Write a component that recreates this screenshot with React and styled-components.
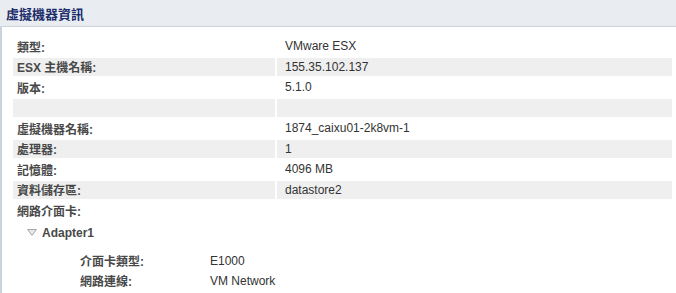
import React from 'react'
import styled, { createGlobalStyle } from 'styled-components'

const GlobalStyle = createGlobalStyle`
  body {
    margin: 0;
    background: #fff;
    font-family: "Liberation Sans", "Noto Sans CJK TC", sans-serif;
  }
`

const rows = [
  { label: '類型:', value: 'VMware ESX' },
  { label: 'ESX 主機名稱:', value: '155.35.102.137' },
  { label: '版本:', value: '5.1.0' },
  { label: '', value: '' },
  { label: '虛擬機器名稱:', value: '1874_caixu01-2k8vm-1' },
  { label: '處理器:', value: '1' },
  { label: '記憶體:', value: '4096 MB' },
  { label: '資料儲存區:', value: 'datastore2' },
  { label: '網路介面卡:', value: null },
]

const adapterRows = [
  { label: '介面卡類型:', value: 'E1000' },
  { label: '網路連線:', value: 'VM Network' },
]

const App = () => {
  return (
    <Panel>
      <GlobalStyle />
      <Header>
        <Title>虛擬機器資訊</Title>
      </Header>
      <Body>
        {rows.map((r, i) => (
          <Row key={i}>
            <Cell striped={i % 2 === 1} pad={4}>
              <Label>{r.label}</Label>
            </Cell>
            {r.value !== null && (
              <Cell striped={i % 2 === 1} pad={8}>
                <Value>{r.value}</Value>
              </Cell>
            )}
          </Row>
        ))}
        <Adapter>
          <svg width="10" height="7" viewBox="0 0 10 7">
            <polygon points="0.5,0.5 9.5,0.5 5,6.5" fill="#e6e6e6" stroke="#a8a8a8" strokeWidth="1" />
          </svg>
          <AdapterName>Adapter1</AdapterName>
        </Adapter>
        <SubTable>
          {adapterRows.map((r) => (
            <SubRow key={r.label}>
              <Label>{r.label}</Label>
              <Value>{r.value}</Value>
            </SubRow>
          ))}
        </SubTable>
      </Body>
    </Panel>
  )
}

const Panel = styled.div`
  width: 676px;
  height: 293px;
  overflow: hidden;
  background: #fff;
`

const Header = styled.div`
  height: 26px;
  background: #e9edf1;
  border-bottom: 1px solid #cdd4db;
  display: flex;
  align-items: center;
  padding-left: 6px;
`

const Title = styled.h2`
  margin: 0;
  font-size: 13px;
  font-weight: bold;
  color: #1c2c6b;
`

const Body = styled.div`
  border-left: 2px solid #cbd4de;
  padding: 10px 4px 0 11px;
  height: 100%;
`

const Row = styled.div`
  display: grid;
  grid-template-columns: 262px 395px;
  column-gap: 2px;
  margin-bottom: 2px;
`

const Cell = styled.div`
  height: 18.5px;
  display: flex;
  align-items: center;
  padding-left: ${(props) => props.pad}px;
  background: ${(props) => (props.striped ? '#efefef' : 'transparent')};
`

const Label = styled.span`
  font-size: 12px;
  font-weight: bold;
  color: #484848;
`

const Value = styled.span`
  font-size: 12px;
  color: #333;
`

const Adapter = styled.div`
  display: flex;
  align-items: center;
  gap: 5px;
  height: 18px;
  margin-top: 4px;
  padding-left: 14px;
`

const AdapterName = styled.span`
  font-size: 12px;
  font-weight: bold;
  color: #484848;
`

const SubTable = styled.div`
  margin-top: 10px;
  padding-left: 67px;
  display: flex;
  flex-direction: column;
  gap: 2px;
`

const SubRow = styled.div`
  display: grid;
  grid-template-columns: 130px 1fr;
  height: 18px;
  align-items: center;
`

export default App
